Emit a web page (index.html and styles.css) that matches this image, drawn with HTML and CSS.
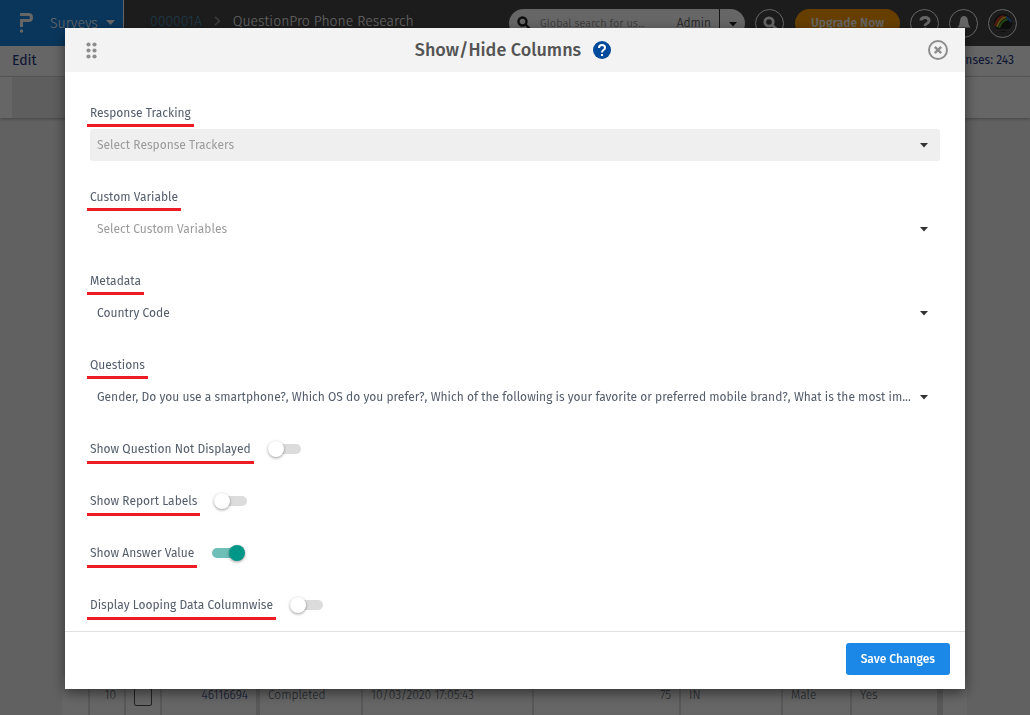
FILE: index.html
```html
<!DOCTYPE html>
<html lang="en">
<head>
    <meta charset="UTF-8">
    <meta name="viewport" content="width=device-width, initial-scale=1.0">
    <title>Show/Hide Columns</title>
    <link rel="stylesheet" href="styles.css">
</head>
<body>
    <div class="page">
        <header class="topbar">
            <a class="product" href="#">
                <svg width="16" height="22" viewBox="0 0 16 22" fill="none" stroke="#fff" stroke-width="3"><path d="M1 2.500H9.500Q12.500 2.500 12.500 5.500T9.500 8.500H2.500V15"/><circle cx="2.500" cy="19" r="1.700" fill="#fff" stroke="none"/></svg>
                <span>Surveys</span>
                <svg width="9" height="6" viewBox="0 0 9 6"><path d="M0 0H9L4.500 5z" fill="#fff"/></svg>
            </a>
            <nav class="crumbs">
                <a href="#">000001A</a>
                <svg width="7" height="10" viewBox="0 0 7 10" fill="none" stroke="#999" stroke-width="1.500"><path d="M1 1l4.500 4L1 9"/></svg>
                <span>QuestionPro Phone Research</span>
            </nav>
            <div class="search">
                <svg width="14" height="14" viewBox="0 0 14 14" fill="none" stroke="#222" stroke-width="2.400"><circle cx="5.500" cy="5.500" r="4"/><path d="M8.500 8.500L13 13"/></svg>
                <input type="text" aria-label="Global search" placeholder="Global search for us...">
                <span class="scope">Admin</span>
                <button type="button" class="scope-toggle" aria-label="Search scope"><svg width="8" height="5" viewBox="0 0 8 5"><path d="M0 0H8L4 4.500z" fill="#222"/></svg></button>
            </div>
            <button type="button" class="round search-btn" aria-label="Search">
                <svg width="16" height="16" viewBox="0 0 16 16" fill="none" stroke="#fff" stroke-width="2.800"><circle cx="7" cy="7" r="4.200"/><path d="M10 10l4.500 4"/></svg>
            </button>
            <button type="button" class="upgrade">Upgrade Now</button>
            <button type="button" class="round" aria-label="Help">
                <svg width="14" height="16" viewBox="0 0 14 16" fill="none" stroke="#fff" stroke-width="3"><path d="M3 5.500Q3 2.500 7 2.500t4 3Q11 7.500 9 8.500T7 11"/><path d="M7 12.500v2.500"/></svg>
            </button>
            <button type="button" class="round" aria-label="Notifications">
                <svg width="16" height="16" viewBox="0 0 16 16" fill="#fff"><path d="M8 1q-3.500 0-4 5-.3 4-2.500 6.500h13Q12.300 10 12 6 11.500 1 8 1zM6.500 13.500h3Q9 15 8 15t-1.500-1.500z"/></svg>
            </button>
            <button type="button" class="round" aria-label="Account">
                <svg width="20" height="20" viewBox="0 0 20 20" fill="none" stroke-width="2"><circle cx="10" cy="10" r="9" fill="#222"/><path d="M2 13Q4 4 11 3" stroke="#d33c2c"/><path d="M4 14Q6 6 13 4" stroke="#e5ba25"/><path d="M6 15Q8 8 15 6" stroke="#55a832"/><path d="M13 4Q16 5 18 9" stroke="#2c6fc1"/><path d="M3 17h14" stroke="#666" stroke-width="1"/></svg>
            </button>
        </header>
        <div class="menubar">
            <a href="#">Edit</a>
            <a class="responses" href="#">Responses: 243</a>
        </div>
        <div class="toolbar"><div class="toolbar-tab"></div></div>
        <main class="content">
            <table class="data">
                <tr>
                    <td class="c-gap"></td>
                    <td class="c-num">10</td>
                    <td class="c-check"><input type="checkbox" aria-label="Select response"></td>
                    <td class="c-id"><a href="#">46116694</a></td>
                    <td class="c-status">Completed</td>
                    <td class="c-time">10/03/2020 17:05:43</td>
                    <td class="c-taken">75</td>
                    <td class="c-country">IN</td>
                    <td class="c-gender">Male</td>
                    <td class="c-phone">Yes</td>
                    <td class="c-gap"></td>
                </tr>
            </table>
        </main>
    </div>

    <div class="overlay">
        <div class="modal" role="dialog" aria-labelledby="modal-title">
            <div class="modal-header">
                <svg class="drag" width="12" height="17" viewBox="0 0 12 17" fill="#8e8e8e"><circle cx="2.500" cy="2.500" r="2.100"/><circle cx="8.500" cy="2.500" r="2.100"/><circle cx="2.500" cy="8.500" r="2.100"/><circle cx="8.500" cy="8.500" r="2.100"/><circle cx="2.500" cy="14.500" r="2.100"/><circle cx="8.500" cy="14.500" r="2.100"/></svg>
                <div class="title">
                    <h1 id="modal-title">Show/Hide Columns</h1>
                    <svg width="18" height="18" viewBox="0 0 18 18" fill="none" stroke="#fff" stroke-width="2"><circle cx="9" cy="9" r="9" fill="#004b9b" stroke="none"/><path d="M6 7Q6 4 9 4t3 2.700Q12 8 10.500 9T9 11.500M9 13v2"/></svg>
                </div>
                <button type="button" class="close" aria-label="Close">
                    <svg width="20" height="20" viewBox="0 0 20 20" fill="none" stroke="#8e8e8e" stroke-width="2"><circle cx="10" cy="10" r="9"/><path d="M6.800 6.800l6.400 6.400M13.200 6.800l-6.400 6.400" stroke-width="2.400"/></svg>
                </button>
            </div>
            <form class="modal-body">
                <div class="field">
                    <label for="tracking">Response Tracking</label>
                    <div class="select empty active">
                        <select id="tracking"><option>Select Response Trackers</option></select>
                        <svg width="8" height="5" viewBox="0 0 8 5"><path d="M0 0H8L4 4.500z"/></svg>
                    </div>
                </div>
                <div class="field">
                    <label for="custom">Custom Variable</label>
                    <div class="select empty">
                        <select id="custom"><option>Select Custom Variables</option></select>
                        <svg width="8" height="5" viewBox="0 0 8 5"><path d="M0 0H8L4 4.500z"/></svg>
                    </div>
                </div>
                <div class="field">
                    <label for="metadata">Metadata</label>
                    <div class="select">
                        <select id="metadata"><option>Country Code</option></select>
                        <svg width="8" height="5" viewBox="0 0 8 5"><path d="M0 0H8L4 4.500z"/></svg>
                    </div>
                </div>
                <div class="field">
                    <label for="questions">Questions</label>
                    <div class="select">
                        <select id="questions"><option>Gender, Do you use a smartphone?, Which OS do you prefer?, Which of the following is your favorite or preferred mobile brand?, What is the most im...</option></select>
                        <svg width="8" height="5" viewBox="0 0 8 5"><path d="M0 0H8L4 4.500z"/></svg>
                    </div>
                </div>
                <div class="switch">
                    <label for="not-displayed">Show Question Not Displayed</label>
                    <input type="checkbox" id="not-displayed">
                </div>
                <div class="switch">
                    <label for="report-labels">Show Report Labels</label>
                    <input type="checkbox" id="report-labels">
                </div>
                <div class="switch">
                    <label for="answer-value">Show Answer Value</label>
                    <input type="checkbox" id="answer-value" checked>
                </div>
                <div class="switch">
                    <label for="looping">Display Looping Data Columnwise</label>
                    <input type="checkbox" id="looping">
                </div>
            </form>
            <div class="modal-footer">
                <button type="button" class="save">Save Changes</button>
            </div>
        </div>
    </div>
</body>
</html>
```
FILE: styles.css
```css
* {
    box-sizing: border-box;
}
body {
    margin: 0;
    font-family: "Fira Sans", "Noto Sans", sans-serif;
    font-size: 12px;
    color: #545e6b;
}
a {
    text-decoration: none;
}
button, input, select {
    font: inherit;
}
svg {
    flex: none;
}

/* page behind the dialog */
.page {
    display: flex;
    flex-direction: column;
    height: 100vh;
    overflow: hidden;
    background: #f2f2f2;
    font-weight: 300;
}
.topbar {
    display: flex;
    align-items: center;
    height: 46px;
    padding-right: 13px;
    background: #484848;
    color: #fff;
}
.product {
    display: flex;
    align-items: center;
    align-self: stretch;
    gap: 8px;
    width: 124px;
    padding-left: 19px;
    border-right: 1px solid #fff;
    background: #1b87e6;
    color: #fff;
    font-size: 14px;
}
.product span {
    margin-left: 7px;
}
.crumbs {
    display: flex;
    flex: 1;
    align-items: center;
    gap: 12px;
    padding-left: 26px;
    padding-bottom: 4px;
    font-size: 14px;
    white-space: nowrap;
}
.crumbs a {
    color: #4a8fb5;
}
.search {
    display: flex;
    align-items: center;
    width: 236px;
    height: 29px;
    margin-right: 10px;
    padding-left: 8px;
    border-radius: 15px;
    background: #fff;
    color: #333;
}
.search input {
    flex: 1;
    min-width: 0;
    padding: 0 0 0 9px;
    border: 0;
    background: none;
    font-size: 11px;
}
.scope {
    padding-right: 8px;
}
.scope-toggle {
    align-self: stretch;
    width: 26px;
    padding: 0;
    border: 0;
    border-left: 1px solid #333;
    background: none;
}
.round {
    display: flex;
    align-items: center;
    justify-content: center;
    width: 29px;
    height: 29px;
    margin-left: 10px;
    padding: 0;
    border: 1px solid #fff;
    border-radius: 50%;
    background: none;
}
.search-btn {
    margin: 0 11px 0 0;
}
.upgrade {
    width: 105px;
    height: 29px;
    padding: 0;
    border: 0;
    border-radius: 15px;
    background: #ff9f00;
    color: #fff;
    font-weight: 500;
}
.menubar {
    display: flex;
    align-items: center;
    justify-content: space-between;
    height: 31px;
    padding: 0 16px 2px 12px;
    border-bottom: 1px solid #ddd;
    background: #fff;
}
.menubar a {
    color: #1b3380;
    font-size: 14px;
    font-weight: 400;
}
.menubar .responses {
    font-size: 12px;
}
.toolbar {
    height: 41px;
    padding-left: 12px;
    background: #fff;
    box-shadow: 0 1px 3px rgba(0, 0, 0, 0.3);
}
.toolbar-tab {
    width: 80px;
    height: 100%;
    background: #ebebeb;
}
.content {
    display: flex;
    flex: 1;
    align-items: flex-end;
    margin: 0 63px 0 62px;
}
.data {
    width: 100%;
    border-collapse: collapse;
    table-layout: fixed;
    background: #fff;
}
.data td {
    height: 40px;
    padding: 0 8px;
    border-right: 2px solid #ddd;
    color: #545e6b;
    white-space: nowrap;
}
.data .c-gap {
    width: 27px;
}
.data .c-gap:last-child {
    border: 0;
}
.data .c-num {
    width: 36px;
    text-align: right;
}
.data .c-check {
    width: 36px;
}
.data .c-id {
    width: 97px;
    border-right-width: 4px;
    text-align: right;
}
.c-id a {
    color: #1b3380;
}
.data .c-status {
    width: 104px;
}
.data .c-time {
    width: 171px;
}
.data .c-taken {
    width: 147px;
    text-align: right;
}
.data .c-country {
    width: 102px;
}
.data .c-gender {
    width: 69px;
}
.data .c-phone {
    border-right-width: 6px;
}
.c-check input {
    display: block;
    width: 18px;
    height: 22px;
    margin: 0;
    appearance: none;
    border: 1px solid #555;
    border-radius: 2px;
}

/* dialog */
.overlay {
    position: fixed;
    inset: 0;
    padding: 28px 65px 26px;
    background: rgba(0, 0, 0, 0.6);
}
.modal {
    display: flex;
    flex-direction: column;
    height: 100%;
    background: #fff;
    box-shadow: 0 4px 12px rgba(0, 0, 0, 0.5);
}
.modal-header {
    display: flex;
    flex: none;
    align-items: center;
    justify-content: space-between;
    height: 44px;
    padding: 0 17px 0 21px;
    background: #f3f3f3;
}
.title {
    display: flex;
    align-items: center;
    gap: 12px;
}
.title h1 {
    margin: 0;
    color: #545454;
    font-size: 18px;
    font-weight: 500;
}
.close {
    display: flex;
    padding: 0;
    border: 0;
    background: none;
}
.modal-body {
    flex: 1;
    min-height: 0;
    padding: 32px 25px 0;
}
.modal-body label {
    display: block;
    width: fit-content;
    height: 23px;
    margin-left: -3px;
    padding: 0 3px;
    border-bottom: 3px solid #ed1c24;
    line-height: 18px;
}
.field {
    height: 84px;
}
.select {
    position: relative;
    height: 32px;
    margin-top: 2px;
    border-radius: 3px;
}
.select.active {
    background: #efefef;
}
.select select {
    width: 100%;
    height: 32px;
    padding: 0 28px 0 7px;
    appearance: none;
    border: 0;
    background: none;
    color: #545e6b;
    text-overflow: ellipsis;
}
.select.empty select {
    color: #9b9b9b;
}
.select svg {
    position: absolute;
    top: 14px;
    right: 12px;
    fill: #333;
    pointer-events: none;
}
.switch {
    display: flex;
    gap: 15px;
    height: 52px;
}
.modal-body .switch label {
    height: 24px;
}
.switch input {
    position: relative;
    width: 32px;
    height: 10px;
    margin: 4px 0 0;
    appearance: none;
    border-radius: 5px;
    background: #dcdcdc;
}
.switch input::before {
    content: "";
    position: absolute;
    top: -3px;
    left: -1px;
    width: 16px;
    height: 16px;
    border-radius: 50%;
    background: #fff;
    box-shadow: 0 1px 3px rgba(0, 0, 0, 0.4);
}
.switch input:checked {
    background: #6dbfb8;
}
.switch input:checked::before {
    left: 17px;
    background: #009688;
}
.modal-footer {
    display: flex;
    flex: none;
    align-items: center;
    justify-content: flex-end;
    height: 58px;
    padding: 0 15px 4px;
    border-top: 1px solid #e1e1e1;
}
.save {
    height: 32px;
    padding: 0 15px;
    border: 0;
    border-radius: 3px;
    background: #1b87e6;
    color: #fff;
    font-weight: 500;
}
```
